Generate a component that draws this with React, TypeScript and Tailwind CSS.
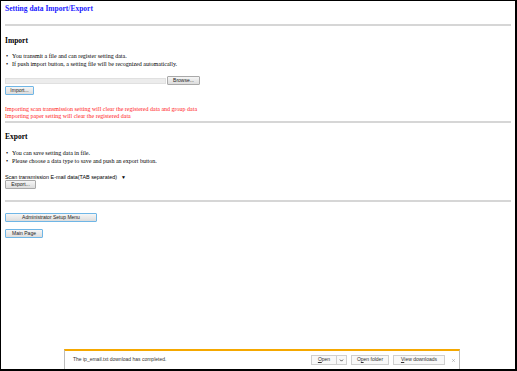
import { ChevronDown, X } from 'lucide-react';

function Btn({ label, focus, className = '' }: { label: string; focus?: boolean; className?: string }) {
  return (
    <button
      className={
        'h-[9px] px-[3px] text-[5px] leading-none text-[#222] rounded-[1px] bg-gradient-to-b from-[#f6f6f6] to-[#dcdcdc] ' +
        (focus ? 'border border-[#6fb6e6] ' : 'border border-[#a9a9a9] ') +
        className
      }
      style={{ fontFamily: '"Liberation Sans", Arial, sans-serif' }}
    >
      {label}
    </button>
  );
}

function HRule() {
  return <div className="h-[2px] bg-[#d6d6d6] mr-[4px]" />;
}

export default function App() {
  return (
    <div className="relative w-[517px] h-[371px] bg-white border-l border-t border-black border-r-2 border-b-2 overflow-hidden font-['Liberation_Serif',serif] text-[6px] text-black">
      <div className="flex flex-col pl-[4px] pt-[4px]">
        {/* Title */}
        <h1 className="text-[#1a1aff] font-bold text-[7.5px] leading-none">Setting data Import/Export</h1>
        <div className="mt-[11px]"><HRule /></div>

        {/* Import */}
        <h2 className="mt-[11px] font-bold text-[7.5px] leading-none">Import</h2>
        <ul className="mt-[9px] flex flex-col gap-[2px] leading-none">
          <li className="flex items-center gap-[4px] pl-[1px]"><span>•</span>You transmit a file and can register setting data.</li>
          <li className="flex items-center gap-[4px] pl-[1px]"><span>•</span>If push import button, a setting file will be recognized automatically.</li>
        </ul>
        <div className="mt-[9px] flex items-center gap-[1px]">
          <div className="w-[161px] h-[6px] bg-[#ececec] border border-[#e0e0e0]" />
          <Btn label="Browse..." className="w-[33px]" />
        </div>
        <div className="mt-[1px]">
          <Btn label="Import..." focus className="w-[29px]" />
        </div>
        <div className="mt-[11px] text-[#ff1a1a] flex flex-col gap-[1px] leading-none">
          <p>Importing scan transmission setting will clear the registered data and group data</p>
          <p>Importing paper setting will clear the registered data</p>
        </div>
        <div className="mt-[2px]"><HRule /></div>

        {/* Export */}
        <h2 className="mt-[10px] font-bold text-[7.5px] leading-none">Export</h2>
        <ul className="mt-[9px] flex flex-col gap-[2px] leading-none">
          <li className="flex items-center gap-[4px] pl-[1px]"><span>•</span>You can save setting data in file.</li>
          <li className="flex items-center gap-[4px] pl-[1px]"><span>•</span>Please choose a data type to save and push an export button.</li>
        </ul>
        <div className="mt-[11px] flex items-center gap-[4px] text-[5.4px] leading-none" style={{ fontFamily: '"Liberation Sans", Arial, sans-serif' }}>
          <span>Scan transmission E-mail data(TAB separated)</span>
          <span className="text-[5px]">▼</span>
        </div>
        <div className="mt-[0px]">
          <Btn label="Export..." className="w-[31px]" />
        </div>
        <div className="mt-[11px]"><HRule /></div>

        {/* Nav buttons */}
        <div className="mt-[11px]">
          <Btn label="Administrator Setup Menu" focus className="w-[92px]" />
        </div>
        <div className="mt-[7px]">
          <Btn label="Main Page" focus className="w-[38px]" />
        </div>
      </div>

      {/* Download bar */}
      <div
        className="absolute left-[63px] bottom-0 w-[396px] h-[20px] bg-white border-t-2 border-t-[#f5a800] border-l border-r border-l-[#bcbcbc] border-r-[#bcbcbc] flex items-center text-[5px] text-[#333]"
        style={{ fontFamily: '"Liberation Sans", Arial, sans-serif' }}
      >
        <span className="ml-[8px]">The ip_email.txt download has completed.</span>
        <div className="ml-auto flex items-center gap-[4px] mr-[3px]">
          <div className="flex items-center">
            <div className="h-[10px] w-[26px] border border-[#cfcfcf] bg-[#f8f8f8] flex items-center justify-center"><u>O</u>pen</div>
            <div className="h-[10px] w-[10px] border border-l-0 border-[#cfcfcf] bg-[#f8f8f8] flex items-center justify-center">
              <ChevronDown className="w-[5px] h-[5px]" strokeWidth={4} />
            </div>
          </div>
          <div className="h-[10px] w-[38px] border border-[#cfcfcf] bg-[#f8f8f8] flex items-center justify-center">O<u>p</u>en folder</div>
          <div className="h-[10px] w-[52px] border border-[#cfcfcf] bg-[#f8f8f8] flex items-center justify-center"><u>V</u>iew downloads</div>
          <X className="w-[5px] h-[5px] text-[#888] ml-[2px]" strokeWidth={2} />
        </div>
      </div>
    </div>
  );
}
